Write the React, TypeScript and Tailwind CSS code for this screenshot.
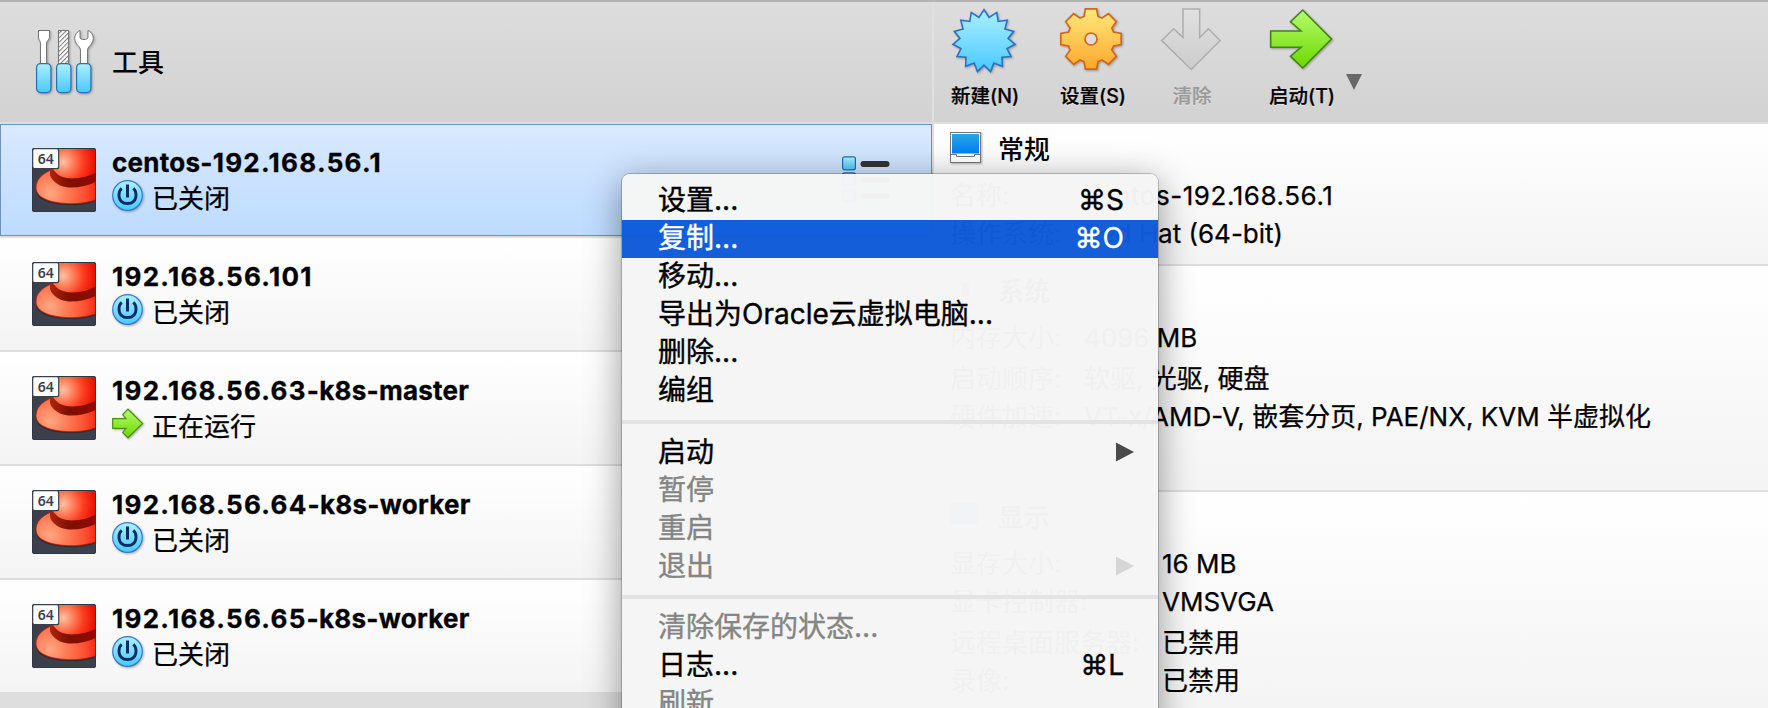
import type { ReactNode } from "react";

const SANS = "font-['Inter','Noto_Sans_CJK_SC',sans-serif]";

function polar(cx: number, cy: number, r: number, deg: number): [number, number] {
  const a = (deg * Math.PI) / 180;
  return [cx + r * Math.sin(a), cy - r * Math.cos(a)];
}

function starPoints(cx: number, cy: number, outer: number, inner: number, n: number) {
  const pts: string[] = [];
  for (let i = 0; i < n * 2; i++) {
    pts.push(polar(cx, cy, i % 2 ? inner : outer, (i * 180) / n).map((v) => v.toFixed(2)).join(","));
  }
  return pts.join(" ");
}

function gearPoints(cx: number, cy: number) {
  const pts: string[] = [];
  const tooth: [number, number][] = [
    [-7, -22.5],
    [-5.6, -30.2],
    [5.6, -30.2],
    [7, -22.5],
  ];
  for (let i = 0; i < 8; i++) {
    const a = (i * Math.PI) / 4;
    for (const [x, y] of tooth) {
      const px = cx + x * Math.cos(a) - y * Math.sin(a);
      const py = cy + x * Math.sin(a) + y * Math.cos(a);
      pts.push(px.toFixed(2) + "," + py.toFixed(2));
    }
  }
  return pts.join(" ");
}

function Gradients() {
  return (
    <svg width="0" height="0" className="absolute">
      <defs>
        <linearGradient id="blue" x1="0" y1="0" x2="0" y2="1">
          <stop offset="0" stopColor="#abf0ff" />
          <stop offset="1" stopColor="#4ac8ff" />
        </linearGradient>
        <linearGradient id="orange" x1="0" y1="0" x2="0" y2="1">
          <stop offset="0" stopColor="#ffe97c" />
          <stop offset="1" stopColor="#ffa82a" />
        </linearGradient>
        <linearGradient id="green" x1="0" y1="0" x2="0" y2="1">
          <stop offset="0" stopColor="#b4fc6c" />
          <stop offset="1" stopColor="#6cd800" />
        </linearGradient>
        <linearGradient id="grey" x1="0" y1="0" x2="0" y2="1">
          <stop offset="0" stopColor="#e0e0e0" />
          <stop offset="1" stopColor="#cccccc" />
        </linearGradient>
        <linearGradient id="screen" x1="0" y1="0" x2="0" y2="1">
          <stop offset="0" stopColor="#2aa5e4" />
          <stop offset="1" stopColor="#0080f6" />
        </linearGradient>
        <radialGradient id="crown" gradientUnits="userSpaceOnUse" cx="31" cy="14" r="32">
          <stop offset="0" stopColor="#ffc4a8" />
          <stop offset="0.3" stopColor="#ff8460" />
          <stop offset="0.65" stopColor="#fd3c20" />
          <stop offset="1" stopColor="#e21500" />
        </radialGradient>
        <radialGradient id="brim" gradientUnits="userSpaceOnUse" cx="18" cy="45" r="50">
          <stop offset="0" stopColor="#ffa882" />
          <stop offset="0.35" stopColor="#ff7a56" />
          <stop offset="0.7" stopColor="#fd5030" />
          <stop offset="1" stopColor="#ee2004" />
        </radialGradient>
        <linearGradient id="band" x1="0" y1="0" x2="1" y2="0">
          <stop offset="0" stopColor="#b0240c" />
          <stop offset="0.4" stopColor="#7c1000" />
          <stop offset="1" stopColor="#920a00" />
        </linearGradient>
        <pattern id="hatch" width="3.2" height="3.2" patternUnits="userSpaceOnUse" patternTransform="rotate(45)">
          <rect width="3.2" height="3.2" fill="#fff" />
          <rect width="1" height="3.2" fill="#777" />
        </pattern>
        <clipPath id="osClip">
          <rect x="0" y="0" width="64" height="64" rx="2" />
        </clipPath>
      </defs>
    </svg>
  );
}

const SHADOW = "drop-shadow-[1px_1px_1px_rgba(0,0,0,0.3)]";

function ToolsIcon() {
  return (
    <svg width="64" height="68" viewBox="0 0 64 68" className={SHADOW}>
      <g stroke="#777" strokeWidth="1" strokeLinejoin="round">
        <path d="M6.5 2.5H17.5V9C17.5 12.500 14.500 12 14.500 16V36H8.500V16C8.500 12 6.500 12.500 6.500 9Z" fill="#fff" />
        <rect x="26.500" y="2.500" width="10" height="34" fill="url(#hatch)" />
        <path d="M48 2.500C43.500 4.500 41.500 9.500 43.500 14C45 17.500 48.500 19 48.500 22V36H55.500V22C55.500 19 59 17.500 60.500 14C62.500 9.500 60.500 4.500 56 2.500V9.500C56 10.800 54.500 11.500 52 11.500C49.500 11.500 48 10.800 48 9.500Z" fill="#fff" />
      </g>
      <g fill="url(#blue)" stroke="#2a6db8" strokeWidth="1.200">
        <rect x="4.600" y="35.600" width="14.300" height="29" rx="4" />
        <rect x="24.600" y="35.600" width="14.300" height="29" rx="4" />
        <rect x="44.600" y="35.600" width="14.300" height="29" rx="4" />
      </g>
    </svg>
  );
}

function OsIcon() {
  return (
    <svg width="64" height="64" viewBox="0 0 64 64" className="shrink-0">
      <g clipPath="url(#osClip)">
        <rect width="64" height="64" fill="#3b404c" />
        <path d="M4 42C4 32 10 26 19 22H66V52.500C56 57 44 58 34 57C18 56 4 52 4 42Z" fill="#2a1518" opacity="0.5" />
        <path d="M4 39.500C4 32 9 26.500 19 22H66V51C56 55 44 56.200 34 55.500C18 54.500 4 50 4 39.500Z" fill="url(#brim)" stroke="#b52008" strokeWidth="0.800" />
        <path d="M20 18C17 23 17.500 28 20 31C25 37.500 32 39.500 39 39.500C49 39.500 58 37 66 33V22Z" fill="url(#band)" />
        <path d="M27 1C25.500 8 24.500 14 20.500 20C24 27 31 30.500 40 30.500C50 30.500 58 28 66 23.500V1Z" fill="url(#crown)" />
      </g>
      <rect x="0.500" y="0.500" width="63" height="63" rx="2" fill="none" stroke="#30343f" strokeOpacity="0.8" />
      <rect x="0.700" y="0.700" width="26" height="20" rx="2" fill="#fff" stroke="#3b404c" strokeWidth="1.200" />
      <text x="13.800" y="15.800" textAnchor="middle" fontSize="14" fontWeight="600" fontFamily="Noto Sans, Open Sans, sans-serif" fill="#3b404c">
        64
      </text>
    </svg>
  );
}

function PowerIcon() {
  return (
    <svg width="32" height="32" viewBox="0 0 32 32" className={SHADOW}>
      <circle cx="15.500" cy="15.500" r="14.800" fill="url(#blue)" stroke="#3578c8" strokeWidth="1.200" />
      <path d="M15.500 4.500V17.500" stroke="#0a2c66" strokeWidth="3" fill="none" />
      <path d="M9.700 8.300C7.500 10 7 12 7 15.200C7 20.500 10.500 23.500 15.500 23.500C20.500 23.500 24 20.500 24 15.200C24 12 23.500 10 21.300 8.300" stroke="#0a2c66" strokeWidth="2.900" fill="none" />
    </svg>
  );
}

function RunningIcon() {
  return (
    <svg width="32" height="32" viewBox="0 0 32 32" className={SHADOW}>
      <path d="M0.700 10.700H14L10.700 6.500L16 1.200L30.600 15.500L16 29.800L10.700 24.500L14 20.300H0.700Z" fill="url(#green)" stroke="#4a8f14" strokeWidth="1.200" />
    </svg>
  );
}

function NewIcon() {
  return (
    <svg width="66" height="68" viewBox="0 0 66 68" className={SHADOW}>
      <polygon points={starPoints(33, 35, 31.2, 24.2, 15)} fill="url(#blue)" stroke="#2a72c4" strokeWidth="1.600" />
    </svg>
  );
}

function SettingsIcon() {
  return (
    <svg width="66" height="68" viewBox="0 0 66 68" className={SHADOW}>
      <polygon points={gearPoints(32, 33)} fill="url(#orange)" stroke="#d4641a" strokeWidth="1.700" />
      <circle cx="32" cy="33" r="6" fill="#dcdcdc" stroke="#d4641a" strokeWidth="1.700" />
    </svg>
  );
}

function DiscardIcon() {
  return (
    <svg width="66" height="68" viewBox="0 0 66 68">
      <path d="M25 3H41.700V31.500L50.400 22.700L62.200 34.500L33.200 63.500L3.700 34.500L15.700 22.700L25 31.500Z" fill="url(#grey)" stroke="#adadad" strokeWidth="1.500" />
    </svg>
  );
}

function StartIcon() {
  return (
    <svg width="66" height="68" viewBox="0 0 66 68" className={SHADOW}>
      <path d="M2.700 25H33L22.500 15.800L34.700 4L63.500 33L34.700 62L22.500 50.200L33 41.200H2.700Z" fill="url(#green)" stroke="#3f8512" strokeWidth="1.600" />
    </svg>
  );
}

function GeneralIcon() {
  return (
    <svg width="32" height="32" viewBox="0 0 32 32" className={SHADOW}>
      <rect x="0.500" y="0.500" width="30" height="30" fill="#fff" stroke="#777" />
      <rect x="2" y="2" width="27" height="19.500" fill="url(#screen)" />
      <path d="M0.500 22.500H6.500V24.500H24.500V22.500H30.500" fill="none" stroke="#777" />
    </svg>
  );
}

function SystemIcon() {
  return (
    <svg width="32" height="32" viewBox="0 0 32 32">
      <rect x="0.500" y="0.500" width="30" height="30" fill="#fff" stroke="#bbb" />
      <rect x="12" y="9" width="7" height="13" fill="#777" />
    </svg>
  );
}

function DisplayIcon() {
  return (
    <svg width="32" height="32" viewBox="0 0 32 32">
      <rect x="0" y="3" width="28" height="21" fill="#5f9ff0" />
    </svg>
  );
}

function DetailsToggle() {
  return (
    <svg width="50" height="50" viewBox="0 0 50 50" className="absolute top-[31px] left-[841px]">
      {[1, 17, 33].map((y) => (
        <g key={y}>
          <rect x="0.600" y={y - 0.2} width="12.800" height="13" rx="2" fill="url(#blue)" stroke="#1f6cad" strokeWidth="1.200" />
          <rect x="18.500" y={y + 4} width="29" height="6" rx="3" fill="#333" />
        </g>
      ))}
    </svg>
  );
}

type Vm = { prefix?: string; address: string; suffix?: string; running?: boolean; selected?: boolean };

const VMS: Vm[] = [
  { prefix: "centos-", address: "192.168.56.1", selected: true },
  { address: "192.168.56.101" },
  { address: "192.168.56.63", suffix: "-k8s-master", running: true },
  { address: "192.168.56.64", suffix: "-k8s-worker" },
  { address: "192.168.56.65", suffix: "-k8s-worker" },
];

function VmRow({ prefix, address, suffix, running, selected }: Vm) {
  return (
    <div
      className={
        selected
          ? "relative flex h-28 shrink-0 border border-[#7090bd] bg-linear-to-b from-[#d9e9ff] to-[#bddbff] pt-[23px] pl-[31px]"
          : "relative flex h-28 shrink-0 bg-linear-to-b from-white to-[#f4f4f4] pt-6 pl-8"
      }
    >
      <OsIcon />
      <div className="ml-4 flex flex-col">
        <div className="-mt-[3px] h-[35px] text-[26px] leading-9 font-bold tracking-[0.25px] whitespace-nowrap text-black [-webkit-text-stroke:0.3px]">
          {prefix}
          <span className="tracking-[1.28px]">{address}</span>
          {suffix}
        </div>
        <div className="flex h-8">
          {running ? <RunningIcon /> : <PowerIcon />}
          <div className="ml-2 pt-0.5 text-[26px] leading-[34px] text-black [-webkit-text-stroke:0.25px]">{running ? "正在运行" : "已关闭"}</div>
        </div>
      </div>
      {selected && <DetailsToggle />}
    </div>
  );
}

function ToolButton({ icon, label, className, muted }: { icon: ReactNode; label: string; className: string; muted?: boolean }) {
  return (
    <div className={"flex shrink-0 flex-col items-center " + className}>
      {icon}
      <div
        className={
          muted
            ? "mt-2 pl-0.5 text-[19.5px] leading-7 font-medium whitespace-nowrap text-[#999] [-webkit-text-stroke:0.25px] [text-shadow:0_1px_0_#e8e8e8]"
            : "mt-2 pl-0.5 text-[19.5px] leading-7 font-medium whitespace-nowrap text-black [-webkit-text-stroke:0.25px] [text-shadow:0_1px_0_#e8e8e8]"
        }
      >
        {label}
      </div>
    </div>
  );
}

type Detail = { label: string; value: string; spaced?: boolean; wide?: boolean };

function Section({
  icon,
  title,
  rows,
  className,
  labelClass,
}: {
  icon: ReactNode;
  title: string;
  rows: Detail[];
  className: string;
  labelClass: string;
}) {
  return (
    <section className={"shrink-0 bg-linear-to-b from-white to-[#f4f4f4] pt-2 pl-4 " + className}>
      <div className="flex h-[45px]">
        {icon}
        <div className="ml-4 text-[26px] leading-[35px] font-medium text-black">{title}</div>
      </div>
      {rows.map((r) => (
        <div key={r.label} className={r.spaced ? "mt-[3px] flex h-[38px]" : "flex h-[38px]"}>
          <div className={"shrink-0 text-[26px] leading-[38px] whitespace-nowrap text-black " + labelClass}>{r.label}</div>
          <div
            className={
              r.wide
                ? "text-[26px] leading-[38px] tracking-[0.55px] whitespace-nowrap text-black [-webkit-text-stroke:0.25px]"
                : "text-[26px] leading-[38px] whitespace-nowrap text-black [-webkit-text-stroke:0.25px]"
            }
          >
            {r.value}
          </div>
        </div>
      ))}
    </section>
  );
}

type Item = { label: string; keys?: string; submenu?: boolean; disabled?: boolean; active?: boolean };

function MenuItem({ label, keys, submenu, disabled, active }: Item) {
  const tone = active ? "bg-[#0f5bd9]/98 text-white" : disabled ? "text-[#858585]" : "text-black";
  return (
    <div className={"flex h-[38px] shrink-0 items-start justify-between pl-9 text-[28px] font-normal [-webkit-text-stroke:0.4px] " + tone}>
      <span className="whitespace-nowrap">{label}</span>
      {keys && <span className="pr-[34px] whitespace-nowrap">{keys}</span>}
      {submenu && (
        <svg width="18" height="20" viewBox="0 0 18 20" className="mt-[9px] mr-6">
          <path d="M0 0.500L18 10L0 19.500Z" fill={disabled ? "#d6d6d6" : "#4a4a4a"} />
        </svg>
      )}
    </div>
  );
}

function MenuBreak() {
  return (
    <div className="h-[23px] shrink-0 bg-[#f5f5f5]/98 pt-2.5">
      <div className="h-1 bg-[#e3e3e3]" />
    </div>
  );
}

function MenuGroup({ items, className }: { items: Item[]; className: string }) {
  return (
    <div className={"shrink-0 " + className}>
      {items.map((i) => (
        <div key={i.label} className={i.active ? "" : "bg-[#f5f5f5]/98"}>
          <MenuItem {...i} />
        </div>
      ))}
    </div>
  );
}

function ContextMenu() {
  return (
    <div className="absolute top-[174px] left-[622px] h-[600px] w-[536px] rounded-lg shadow-[0_0_0_1px_rgba(0,0,0,0.2),0_8px_36px_rgba(0,0,0,0.42)]">
      <div className="flex h-full flex-col overflow-hidden rounded-lg">
        <div className="h-2 shrink-0 bg-[#f5f5f5]/98" />
        <MenuGroup
          className="leading-9"
          items={[
            { label: "设置...", keys: "⌘S" },
            { label: "复制...", keys: "⌘O", active: true },
            { label: "移动..." },
            { label: "导出为Oracle云虚拟电脑..." },
            { label: "删除..." },
            { label: "编组" },
          ]}
        />
        <MenuBreak />
        <MenuGroup
          className="leading-[38px]"
          items={[
            { label: "启动", submenu: true },
            { label: "暂停", disabled: true },
            { label: "重启", disabled: true },
            { label: "退出", disabled: true, submenu: true },
          ]}
        />
        <MenuBreak />
        <MenuGroup
          className="leading-[39px]"
          items={[
            { label: "清除保存的状态...", disabled: true },
            { label: "日志...", keys: "⌘L" },
            { label: "刷新", disabled: true },
          ]}
        />
      </div>
    </div>
  );
}

export default function App() {
  return (
    <div className={"relative flex h-[708px] w-[1768px] overflow-hidden bg-[#dedede] " + SANS}>
      <Gradients />
      <aside className="flex w-[932px] shrink-0 flex-col">
        <div className="flex h-[122px] shrink-0 border-t-2 border-[#b4b4b4] bg-linear-to-b from-[#dddddd] to-[#d2d2d2] pt-[26px] pl-8">
          <ToolsIcon />
          <div className="ml-4 pt-4 text-[26px] leading-[38px] font-medium text-black">工具</div>
        </div>
        <div className="mt-0.5 flex flex-col gap-0.5">
          {VMS.map((vm) => (
            <VmRow key={vm.address} {...vm} />
          ))}
        </div>
      </aside>
      <main className="flex w-[836px] shrink-0 flex-col">
        <div className="flex h-[122px] shrink-0 border-t-2 border-[#b4b4b4] bg-linear-to-b from-[#dddddd] to-[#d2d2d2] pt-1">
          <div className="-mt-1 w-0.5 shrink-0 bg-[#e0e0e0]" />
          <ToolButton className="ml-[15px] w-[70px]" icon={<NewIcon />} label="新建(N)" />
          <ToolButton className="ml-9 w-[74px]" icon={<SettingsIcon />} label="设置(S)" />
          <ToolButton className="ml-[27px] w-[70px]" icon={<DiscardIcon />} label="清除" muted />
          <ToolButton className="ml-10 w-[70px]" icon={<StartIcon />} label="启动(T)" />
          <svg width="16" height="16" viewBox="0 0 16 16" className="mt-[68px] ml-2.5">
            <path d="M0 0H16L8 16Z" fill="#686868" />
          </svg>
        </div>
        <div className="mt-0.5 flex flex-col gap-0.5 pl-0.5">
          <Section
            className="h-[140px]"
            labelClass="w-[134px]"
            icon={<GeneralIcon />}
            title="常规"
            rows={[
              { label: "名称:", value: "centos-192.168.56.1", wide: true },
              { label: "操作系统:", value: "Red Hat (64-bit)" },
            ]}
          />
          <Section
            className="h-[224px]"
            labelClass="w-[134px]"
            icon={<SystemIcon />}
            title="系统"
            rows={[
              { label: "内存大小:", value: "4096 MB" },
              { label: "启动顺序:", value: "软驱, 光驱, 硬盘", spaced: true },
              { label: "硬件加速:", value: "VT-x/AMD-V, 嵌套分页, PAE/NX, KVM 半虚拟化" },
            ]}
          />
          <Section
            className="h-[216px]"
            labelClass="w-[212px]"
            icon={<DisplayIcon />}
            title="显示"
            rows={[
              { label: "显存大小:", value: "16 MB" },
              { label: "显卡控制器:", value: "VMSVGA" },
              { label: "远程桌面服务器:", value: "已禁用", spaced: true },
              { label: "录像:", value: "已禁用" },
            ]}
          />
        </div>
      </main>
      <ContextMenu />
    </div>
  );
}
